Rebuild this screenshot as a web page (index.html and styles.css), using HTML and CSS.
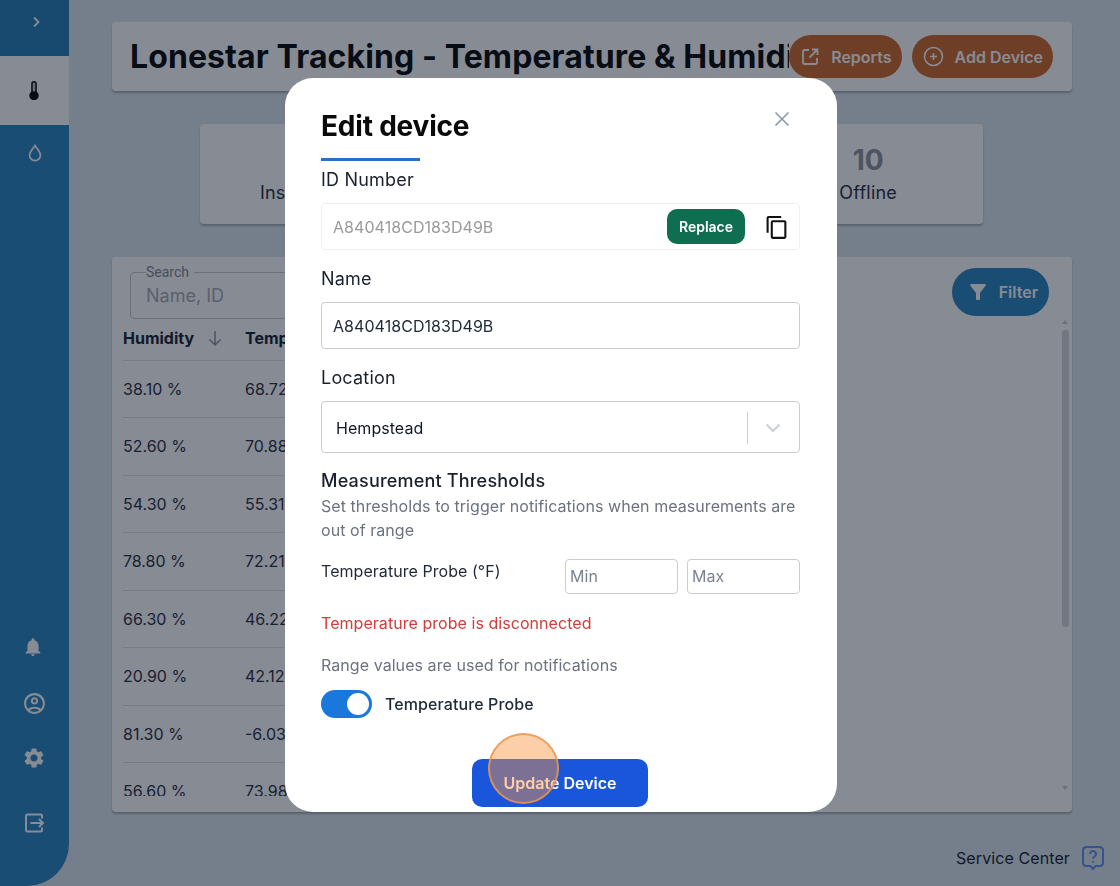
FILE: index.html
```html
<!DOCTYPE html>
<html lang="en">
<head>
  <meta charset="UTF-8" />
  <title>Lonestar Tracking - Temperature &amp; Humidity</title>
  <link rel="stylesheet" href="styles.css">
</head>
<body>
  <div class="app">
    <nav class="sidebar">
      <div class="nav-top">
        <div class="nav-toggle">
          <svg width="14" height="14" viewBox="0 0 14 14" fill="none" stroke="currentColor" stroke-width="1.8"><path d="M5 2.500 9.500 7 5 11.500"/></svg>
        </div>
        <div class="nav-item active">
          <svg width="10" height="19" viewBox="0 0 10 19"><path fill="#000" d="M2.200 2.800a2.800 2.800 0 0 1 5.600 0v7.900a4.700 4.700 0 1 1-5.600 0z"/><rect x="3.700" y="1.500" width="2.600" height="9" rx="1.200" fill="#fff" fill-opacity=".75"/></svg>
        </div>
        <div class="nav-item">
          <svg width="14" height="18" viewBox="0 0 14 18" fill="none" stroke="currentColor" stroke-width="1.7"><path d="M7 1.600C5.400 4.400 1.600 7.400 1.600 11.300a5.400 5.400 0 0 0 10.800 0C12.400 7.400 8.600 4.400 7 1.600z"/></svg>
        </div>
      </div>
      <div class="nav-bottom">
        <svg class="bell" width="22" height="22" viewBox="0 0 24 24" fill="currentColor"><path d="M12 22c1.100 0 2-.9 2-2h-4c0 1.100.89 2 2 2zm6-6v-5c0-3.070-1.640-5.640-4.500-6.320V4c0-.83-.67-1.500-1.500-1.500s-1.500.67-1.500 1.500v.68C7.630 5.360 6 7.920 6 11v5l-2 2v1h16v-1l-2-2z"/></svg>
        <svg class="profile" width="25" height="25" viewBox="0 0 24 24" fill="currentColor"><path d="M12 2C6.480 2 2 6.480 2 12s4.480 10 10 10 10-4.480 10-10S17.520 2 12 2zM7.350 18.500C8.660 17.560 10.260 17 12 17s3.340.56 4.650 1.500c-1.310.94-2.910 1.500-4.650 1.500s-3.340-.56-4.650-1.500zm10.790-1.380C16.450 15.800 14.320 15 12 15s-4.450.8-6.140 2.120C4.700 15.730 4 13.950 4 12c0-4.420 3.580-8 8-8s8 3.580 8 8c0 1.950-.7 3.730-1.860 5.120z"/><path d="M12 6c-1.930 0-3.500 1.570-3.500 3.500S10.070 13 12 13s3.500-1.570 3.500-3.500S13.930 6 12 6zm0 5c-.83 0-1.500-.67-1.500-1.500S11.170 8 12 8s1.500.67 1.500 1.500S12.830 11 12 11z"/></svg>
        <svg width="24" height="24" viewBox="0 0 24 24" fill="currentColor"><path d="M19.140 12.940c.04-.3.06-.61.06-.94 0-.32-.02-.64-.07-.94l2.030-1.580c.18-.14.23-.41.12-.61l-1.920-3.320c-.12-.22-.37-.29-.59-.22l-2.390.96c-.5-.38-1.030-.7-1.620-.94l-.36-2.540c-.04-.24-.24-.41-.48-.41h-3.840c-.24 0-.43.17-.47.41l-.36 2.540c-.59.24-1.130.57-1.620.94l-2.390-.96c-.22-.08-.47 0-.59.22L2.740 8.870c-.12.21-.08.47.12.61l2.030 1.580c-.05.3-.09.63-.09.94s.02.64.07.94l-2.030 1.580c-.18.14-.23.41-.12.61l1.920 3.320c.12.22.37.29.59.22l2.390-.96c.5.38 1.030.7 1.620.94l.36 2.540c.05.24.24.41.48.41h3.840c.24 0 .44-.17.47-.41l.36-2.540c.59-.24 1.130-.56 1.620-.94l2.390.96c.22.08.47 0 .59-.22l1.920-3.320c.12-.22.07-.47-.12-.61l-2.010-1.580zM12 15.600c-1.980 0-3.600-1.620-3.600-3.600s1.620-3.600 3.600-3.600 3.600 1.620 3.600 3.600-1.620 3.600-3.600 3.600z"/></svg>
        <svg class="logout" width="22" height="22" viewBox="0 0 22 22" fill="none" stroke="currentColor" stroke-width="2"><path d="M19 6.500V4a1.500 1.500 0 0 0-1.500-1.500h-13A1.500 1.500 0 0 0 3 4v14a1.500 1.500 0 0 0 1.500 1.500h13A1.500 1.500 0 0 0 19 18v-2.500"/><path d="M7.500 11h12.500M16 7l4 4-4 4"/></svg>
      </div>
    </nav>

    <main class="content">
      <header class="card page-head">
        <h1>Lonestar Tracking - Temperature &amp; Humidity</h1>
        <div class="head-actions">
          <button class="pill orange">
            <svg width="20" height="20" viewBox="0 0 20 20" fill="none" stroke="currentColor" stroke-width="1.800"><path d="M9 3H4.500A1.500 1.500 0 0 0 3 4.500v11A1.500 1.500 0 0 0 4.500 17h11a1.500 1.500 0 0 0 1.500-1.500V11"/><path d="M9.500 10.500 17.500 2.500M12 2.500h5.500V8"/></svg>
            Reports
          </button>
          <button class="pill orange">
            <svg width="21" height="21" viewBox="0 0 21 21" fill="none" stroke="currentColor" stroke-width="1.600"><circle cx="10.500" cy="10.500" r="9"/><path d="M10.500 7v7M7 10.500h7"/></svg>
            Add Device
          </button>
        </div>
      </header>

      <section class="card stats">
        <div class="stat">
          <div class="stat-num">&nbsp;</div>
          <div class="stat-label">Installed</div>
        </div>
        <div class="stat">
          <div class="stat-num">10</div>
          <div class="stat-label">Offline</div>
        </div>
      </section>

      <section class="card table-card">
        <div class="table-tools">
          <fieldset class="search">
            <legend>Search</legend>
            <span>Name, ID</span>
          </fieldset>
          <button class="pill blue">
            <svg width="24" height="24" viewBox="0 0 24 24" fill="currentColor"><path d="M4.250 5.610C6.270 8.200 10 13 10 13v6c0 .55.45 1 1 1h2c.55 0 1-.45 1-1v-6s3.720-4.800 5.740-7.390c.51-.66.04-1.610-.79-1.610H5.040c-.83 0-1.300.95-.79 1.610z"/></svg>
            Filter
          </button>
        </div>
        <div class="table-wrap">
          <div class="rows">
            <div class="row head">
              <div class="col-a">Humidity
                <svg width="18" height="18" viewBox="0 0 18 18" fill="none" stroke="#8a8f98" stroke-width="1.500"><path d="M9 2v14M3.500 10.500 9 16l5.500-5.500"/></svg>
              </div>
              <div>Temperature</div>
            </div>
            <div class="row"><div class="col-a">38.10 %</div><div>68.72</div></div>
            <div class="row"><div class="col-a">52.60 %</div><div>70.88</div></div>
            <div class="row"><div class="col-a">54.30 %</div><div>55.31</div></div>
            <div class="row"><div class="col-a">78.80 %</div><div>72.21</div></div>
            <div class="row"><div class="col-a">66.30 %</div><div>46.22</div></div>
            <div class="row"><div class="col-a">20.90 %</div><div>42.12</div></div>
            <div class="row"><div class="col-a">81.30 %</div><div>-6.03</div></div>
            <div class="row"><div class="col-a">56.60 %</div><div>73.98</div></div>
          </div>
          <div class="scroll-track">
            <span class="arrow-up"></span>
            <span class="scroll-thumb"></span>
            <span class="arrow-down"></span>
          </div>
        </div>
      </section>

      <footer class="service">
        Service Center
        <svg width="24" height="26" viewBox="0 0 24 26" fill="none" stroke="#5a90f0" stroke-width="2"><path d="M5 2h14a3.500 3.500 0 0 1 3 3v13a3.500 3.500 0 0 1-3 3h-4.500L12 24l-2.500-3H5a3.500 3.500 0 0 1-3-3V5a3.500 3.500 0 0 1 3-3z"/><path d="M9 9a3 3 0 1 1 4.600 2.500c-1 .6-1.600 1.100-1.600 2.300M12 16v1.500"/></svg>
      </footer>
    </main>
  </div>

  <div class="overlay">
    <div class="modal">
      <button class="close" aria-label="Close">
        <svg width="16" height="16" viewBox="0 0 16 16" fill="none" stroke="#8b97a6" stroke-width="1.600"><path d="M1.500 1.500 14.500 14.500M14.500 1.500 1.500 14.500"/></svg>
      </button>
      <h2>Edit device</h2>
      <div class="title-rule"></div>

      <label class="field-label first">ID Number</label>
      <div class="input id-input">
        <span>A840418CD183D49B</span>
        <button class="replace">Replace</button>
        <svg class="copy" width="22" height="24" viewBox="2 1 20 23" fill="#111"><path d="M16 1H4c-1.100 0-2 .9-2 2v14h2V3h12V1zm3 4H8c-1.100 0-2 .9-2 2v14c0 1.100.9 2 2 2h11c1.100 0 2-.9 2-2V7c0-1.100-.9-2-2-2zm0 16H8V7h11v14z"/></svg>
      </div>

      <label class="field-label">Name</label>
      <div class="input name-input">A840418CD183D49B</div>

      <label class="field-label">Location</label>
      <div class="input select">
        <span class="select-value">Hempstead</span>
        <span class="select-sep"></span>
        <svg width="16" height="10" viewBox="0 0 16 10" fill="none" stroke="#ccd0d5" stroke-width="2"><path d="M1.500 1.500 8 8l6.500-6.500"/></svg>
      </div>

      <h3>Measurement Thresholds</h3>
      <p class="hint">Set thresholds to trigger notifications when measurements are out of range</p>

      <div class="range-row">
        <span class="range-name">Temperature Probe (°F)</span>
        <div class="range-inputs">
          <div class="mini-input">Min</div>
          <div class="mini-input">Max</div>
        </div>
      </div>

      <p class="error">Temperature probe is disconnected</p>
      <p class="hint range-note">Range values are used for notifications</p>

      <div class="toggle-row">
        <span class="toggle"><span class="knob"></span></span>
        Temperature Probe
      </div>

      <div class="modal-foot">
        <button class="update">Update Device</button>
      </div>
    </div>
  </div>

  <div class="click-dot"></div>
</body>
</html>
```

FILE: styles.css
```css
* {
  box-sizing: border-box;
}

html,
body {
  margin: 0;
  height: 886px;
  overflow: hidden;
}

body {
  font-family: Inter, "Liberation Sans", sans-serif;
  background-color: #d8e6ec;
  color: #1f2937;
}

button {
  font-family: inherit;
  border: none;
  cursor: pointer;
}

.app {
  display: flex;
  height: 886px;
}

.sidebar {
  width: 69px;
  flex-shrink: 0;
  display: flex;
  flex-direction: column;
  justify-content: space-between;
  background-color: #2583bc;
  color: #fff;
  border-bottom-right-radius: 42px;
  padding-bottom: 52px;
}

.nav-toggle {
  height: 56px;
  display: flex;
  align-items: center;
  justify-content: center;
  padding-left: 2px;
  padding-bottom: 13px;
  background-color: #207ab5;
}

.nav-item {
  display: flex;
  align-items: center;
  justify-content: center;
  height: 69px;
}

.nav-item.active {
  background-color: #fff;
  padding-right: 1px;
}

.nav-item:last-child {
  height: 56px;
}

.nav-bottom {
  display: flex;
  flex-direction: column;
  align-items: center;
  gap: 31px;
  padding-right: 1px;
}

.bell {
  margin: 0 2px 2px 0;
}

.profile {
  margin-bottom: -1px;
}

.logout {
  margin-top: 11px;
}

.content {
  flex: 1;
  min-width: 0;
  padding: 22px 48px 0 43px;
  display: flex;
  flex-direction: column;
}

.card {
  background-color: #fff;
  border-radius: 4px;
  box-shadow: 0 2px 2px rgba(0, 0, 0, 0.25);
}

.page-head {
  height: 69px;
  display: flex;
  align-items: center;
  justify-content: space-between;
  padding: 0 19px 0 18px;
}

h1 {
  margin: 0;
  font-size: 32px;
  font-weight: 700;
  letter-spacing: 0.1px;
  color: #000;
  white-space: nowrap;
  overflow: hidden;
  flex: 1;
  min-width: 0;
}

.head-actions {
  display: flex;
  gap: 10px;
}

.pill {
  height: 43px;
  border-radius: 22px;
  display: flex;
  align-items: center;
  gap: 11px;
  padding: 0 10px 0 11px;
  color: #fff;
  font-size: 16px;
  font-weight: 600;
}

.pill.orange {
  background-color: #cd6522;
  white-space: nowrap;
}

.pill.blue {
  background-color: #2583bc;
  height: 48px;
  border-radius: 24px;
  padding: 0 11px 0 14px;
  margin-right: 23px;
  gap: 9px;
}

.stats {
  width: 783px;
  height: 100px;
  margin: 33px 0 33px 88px;
  display: flex;
  justify-content: space-between;
  padding: 19px 86px 0 60px;
}

.stat {
  text-align: center;
}

.stat-num {
  font-size: 28px;
  line-height: 34px;
  font-weight: 700;
  color: #8a8f98;
}

.stat-label {
  font-size: 18px;
  line-height: 22px;
  margin-top: 5px;
  letter-spacing: 0.2px;
  color: #1f2937;
}

.table-card {
  height: 555px;
  padding: 11px 0 0 11px;
  overflow: hidden;
}

.table-tools {
  display: flex;
  justify-content: space-between;
  align-items: flex-start;
  height: 49px;
}

.search {
  width: 400px;
  height: 54px;
  margin: -3px 0 0 7px;
  padding: 0 15px;
  border: 1px solid #c6c8cc;
  border-radius: 4px;
}

.search legend {
  font-family: Roboto, "Liberation Sans", sans-serif;
  font-size: 14px;
  line-height: 14px;
  padding: 0 5px 0 0;
  color: #7d8592;
}

.search span {
  font-size: 18px;
  display: block;
  line-height: 24px;
  margin-top: 5px;
  color: #a3a8b0;
}

.table-wrap {
  display: flex;
  height: 479px;
  justify-content: space-between;
}

.rows {
  width: 400px;
  overflow: hidden;
}

.row {
  display: flex;
  align-items: center;
  height: 57.500px;
  border-bottom: 1px solid #dfe1e5;
  font-size: 16px;
  color: #1f2937;
}

.row.head {
  height: 43.500px;
  font-weight: 700;
  color: #101a2c;
}

.col-a {
  width: 122px;
  display: flex;
  align-items: center;
  gap: 12px;
}

.scroll-track {
  width: 12px;
  margin: 3px 1px 0 0;
  display: flex;
  flex-direction: column;
  align-items: center;
  gap: 6px;
}

.scroll-thumb {
  width: 7px;
  height: 297px;
  background-color: #d4d4d6;
  border-radius: 4px;
  margin-bottom: 153px;
}

.arrow-up,
.arrow-down {
  width: 0;
  height: 0;
  border-left: 3px solid transparent;
  border-right: 3px solid transparent;
}

.arrow-up {
  border-bottom: 4px solid #c8c8c8;
}

.arrow-down {
  border-top: 4px solid #c8c8c8;
}

.service {
  display: flex;
  justify-content: flex-end;
  align-items: center;
  gap: 11px;
  margin: 33px -33px 0 0;
  font-size: 16px;
  letter-spacing: 0.1px;
  color: #101a2c;
}

.overlay {
  position: fixed;
  inset: 0;
  background-color: rgba(15, 23, 42, 0.5);
  display: flex;
  justify-content: center;
  padding-top: 78px;
  padding-left: 2px;
}

.modal {
  position: relative;
  width: 552px;
  height: 734px;
  background-color: #fff;
  border-radius: 28px;
  padding: 28px 37px 0 36px;
  font-size: 16px;
  letter-spacing: 0.05px;
  overflow: hidden;
}

.close {
  position: absolute;
  top: 33px;
  right: 47px;
  padding: 0;
  background: none;
  line-height: 0;
}

h2 {
  margin: 0;
  font-size: 28px;
  line-height: 40px;
  font-weight: 700;
  letter-spacing: -0.2px;
  color: #0a0a0a;
}

.title-rule {
  width: 99px;
  height: 3px;
  margin-top: 12px;
  background-color: #2a6fc0;
}

.field-label {
  display: block;
  font-size: 18px;
  line-height: 22px;
  margin: 18px 0 12px;
  letter-spacing: 0.2px;
  font-weight: 400;
  color: #1a202c;
}

.field-label.first {
  margin-top: 8px;
}

.input {
  display: flex;
  align-items: center;
  width: 479px;
  border: 1px solid #ccc;
  border-radius: 4px;
  padding: 0 12px 0 11px;
  color: #1f2937;
}

.id-input {
  height: 47px;
  border-color: #efefef;
  color: #9a9a9a;
}

.id-input span {
  flex: 1;
}

.replace {
  width: 78px;
  height: 35px;
  margin: -1px 20px 0 0;
  border-radius: 10px;
  background-color: #0e6e4f;
  color: #fff;
  font-size: 14px;
  font-weight: 600;
  padding: 0;
}

.copy {
  margin: 2px -1px 0 1px;
}

.name-input {
  height: 47px;
}

.select {
  height: 52px;
  padding: 2px 18px 0 14px;
  color: #111827;
}

.select-value {
  flex: 1;
}

.select-sep {
  width: 1px;
  height: 32px;
  margin-right: 17px;
  background-color: #ccc;
}

h3 {
  margin: 16px 0 0;
  font-size: 18px;
  line-height: 24px;
  font-weight: 500;
  letter-spacing: 0.2px;
  color: #1a202c;
}

.hint {
  margin: 1px 0 0;
  font-size: 16px;
  line-height: 24px;
  letter-spacing: 0.06px;
  color: #6b7280;
}

.range-row {
  display: flex;
  justify-content: space-between;
  margin-top: 17px;
  width: 479px;
}

.range-name {
  line-height: 24px;
  color: #1f2937;
  font-size: 16px;
  font-weight: 400;
}

.range-inputs {
  display: flex;
  gap: 9px;
}

.mini-input {
  width: 113px;
  height: 35px;
  padding: 0 4px;
  border: 1px solid #ccc;
  border-radius: 4px;
  line-height: 33px;
  color: #7b8390;
}

.error {
  margin: 17px 0 0;
  line-height: 24px;
  color: #d13c3c;
}

.range-note {
  margin-top: 18px;
}

.toggle-row {
  display: flex;
  align-items: center;
  gap: 13px;
  margin-top: 13px;
  color: #1f2937;
  font-weight: 500;
  letter-spacing: 0.1px;
}

.toggle {
  width: 51px;
  height: 28px;
  padding: 3px;
  display: flex;
  justify-content: flex-end;
  border-radius: 14px;
  background-color: #1a78dc;
}

.knob {
  width: 22px;
  height: 22px;
  border-radius: 50%;
  background-color: #fff;
}

.modal-foot {
  display: flex;
  justify-content: center;
  margin-top: 41px;
  padding-right: 1px;
}

.update {
  width: 176px;
  height: 48px;
  border-radius: 10px;
  background-color: #1a56db;
  color: #fff;
  font-size: 16px;
  font-weight: 600;
}

.click-dot {
  position: fixed;
  left: 488px;
  top: 733px;
  width: 71px;
  height: 71px;
  border-radius: 50%;
  background-color: rgba(251, 146, 60, 0.44);
  border: 2px solid rgba(234, 150, 80, 0.85);
}
```
